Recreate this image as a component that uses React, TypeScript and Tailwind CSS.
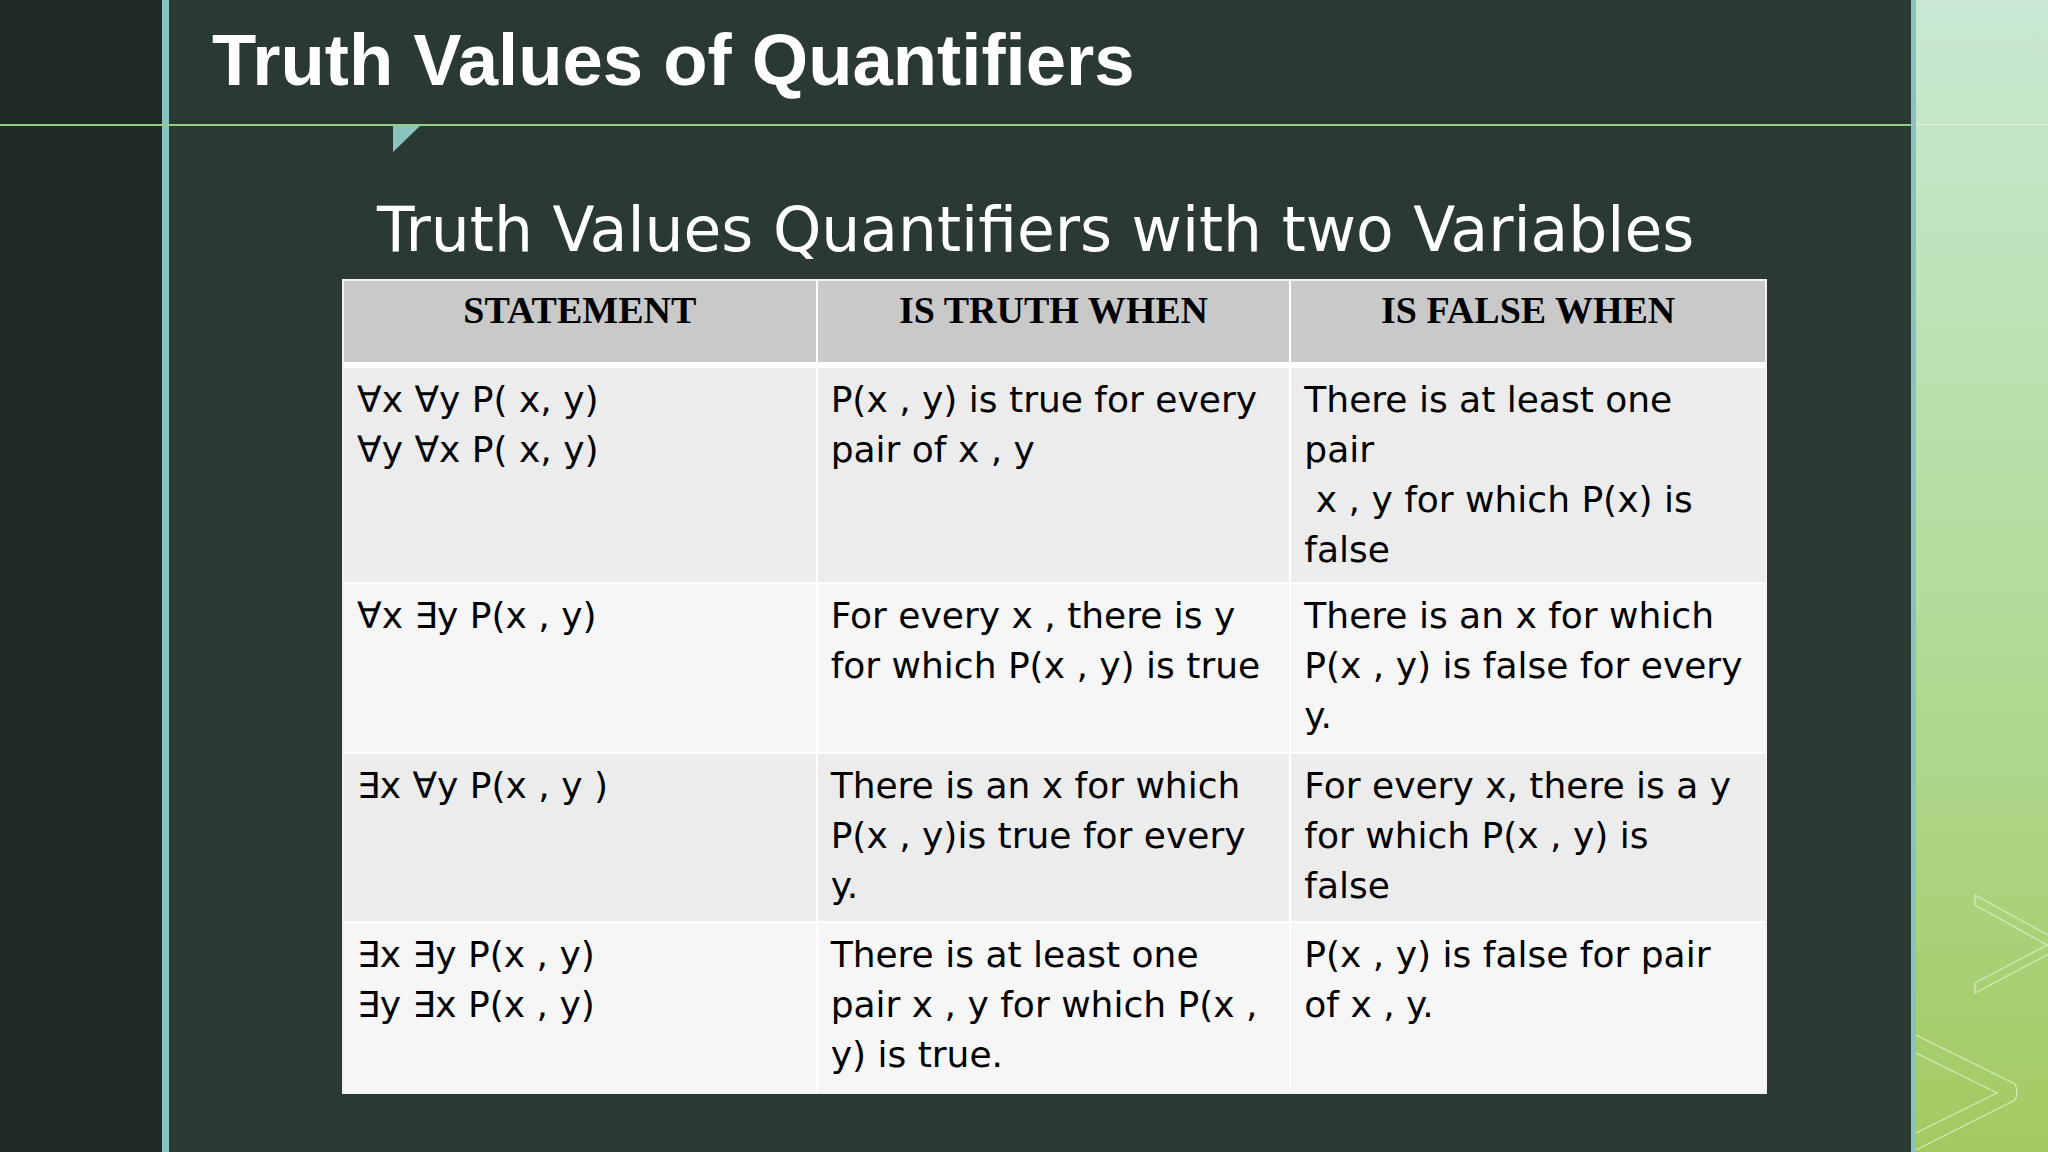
import React from 'react';

// rows of the quantifier table, one string per printed line
const rows = [
  {
    bg: 'bg-[#ececec]',
    h: 'h-[216px] border-b-2',
    cells: [
      ['∀x ∀y P( x, y)', '∀y ∀x P( x, y)'],
      ['P(x , y) is true for every', 'pair of x , y'],
      ['There is at least one', 'pair', ' x , y for which P(x) is', 'false'],
    ],
  },
  {
    bg: 'bg-[#f6f6f6]',
    h: 'h-[170px] border-b-2',
    cells: [
      ['∀x ∃y P(x , y)'],
      ['For every x , there is y', 'for which P(x , y) is true'],
      ['There is an x for which', 'P(x , y) is false for every', 'y.'],
    ],
  },
  {
    bg: 'bg-[#ececec]',
    h: 'h-[169px] border-b-2',
    cells: [
      ['∃x ∀y P(x , y )'],
      ['There is an x for which', 'P(x , y)is true for every', 'y.'],
      ['For every x, there is a y', 'for which P(x , y) is', 'false'],
    ],
  },
  {
    bg: 'bg-[#f6f6f6]',
    h: 'h-[169px]',
    cells: [
      ['∃x ∃y P(x , y)', '∃y ∃x P(x , y)'],
      ['There is at least one', 'pair x , y for which P(x ,', 'y) is true.'],
      ['P(x , y) is false for pair', 'of x , y.'],
    ],
  },
];

const headers = ['STATEMENT', 'IS TRUTH WHEN', 'IS FALSE WHEN'];

const Chevrons: React.FC = () => (
  <svg className="absolute inset-0 h-full w-full" viewBox="0 0 132 1152" preserveAspectRatio="none">
    <g fill="none" stroke="#e8f5d8" strokeOpacity="0.75" strokeWidth="1.2">
      <path d="M59 895 L150 945 L59 993 L59 983 L131 945 L59 905 Z" />
      <path d="M0 1035 L99 1084 Q103 1093 99 1100 L0 1150" />
      <path d="M0 1053 L81 1093 L0 1133" />
    </g>
  </svg>
);

const App: React.FC = () => {
  return (
    <div className="relative flex h-[1152px] w-[2048px] overflow-hidden">
      {/* left dark strip + teal bar */}
      <div className="w-[162px] shrink-0 bg-[#1f2a26]" />
      <div className="w-[7px] shrink-0 bg-[#8bc1c1]" />

      {/* slide body */}
      <div className="flex w-[1742px] shrink-0 flex-col bg-[#2b3933]">
        <div className="h-[124px] pl-[43px] pt-[24px]">
          <h1 className="text-[72.5px] font-bold leading-none text-white font-['Liberation_Sans',Arial,sans-serif]">
            Truth Values of Quantifiers
          </h1>
        </div>

        <div className="ml-[224px] mt-[2px] h-[26px] w-[27px]">
          <svg width="27" height="26" viewBox="0 0 27 26">
            <polygon points="0,0 27,0 0,26" fill="#8cc2c0" />
          </svg>
        </div>

        <h2 className="mt-[48px] pl-[208px] text-[61.5px] leading-none text-white font-['DejaVu_Sans',Verdana,sans-serif]">
          Truth Values Quantifiers with two Variables
        </h2>

        <div className="ml-[173px] mt-[17px] w-[1425px] border-2 border-[#f2f2f2] font-['DejaVu_Sans',Verdana,sans-serif] text-black">
          <div className="grid h-[87px] grid-cols-3 border-b-[6px] border-white bg-[#c9c9c9]">
            {headers.map((h, i) => (
              <div
                key={h}
                className={`pt-[10px] text-center text-[38px] font-bold leading-none font-['Liberation_Serif','Times_New_Roman',serif] ${i < 2 ? 'border-r-2 border-white' : ''}`}
              >
                {h}
              </div>
            ))}
          </div>

          {rows.map((row, r) => (
            <div key={r} className={`grid grid-cols-3 border-white ${row.h} ${row.bg}`}>
              {row.cells.map((lines, c) => (
                <div
                  key={c}
                  className={`pl-[13px] pt-[7px] text-[36px] leading-[50px] ${c < 2 ? 'border-r-2 border-white' : ''}`}
                >
                  {lines.map((line, k) => (
                    <div key={k} className="whitespace-pre">
                      {line}
                    </div>
                  ))}
                </div>
              ))}
            </div>
          ))}
        </div>
      </div>

      {/* right teal bar + green panel */}
      <div className="w-[5px] shrink-0 bg-[#8bc1c1]" />
      <div className="relative flex-1 bg-linear-to-b from-[#c9e9d3] via-[#b2dd9c] to-[#a3ca60]">
        <div className="absolute left-0 right-0 top-[124px] h-px bg-[#dff3d6]" />
        <Chevrons />
      </div>

      {/* green rule across the top */}
      <div className="absolute left-0 top-[124px] h-[2px] w-[1911px] bg-[#8fcf88]" />
    </div>
  );
};

export default App;
